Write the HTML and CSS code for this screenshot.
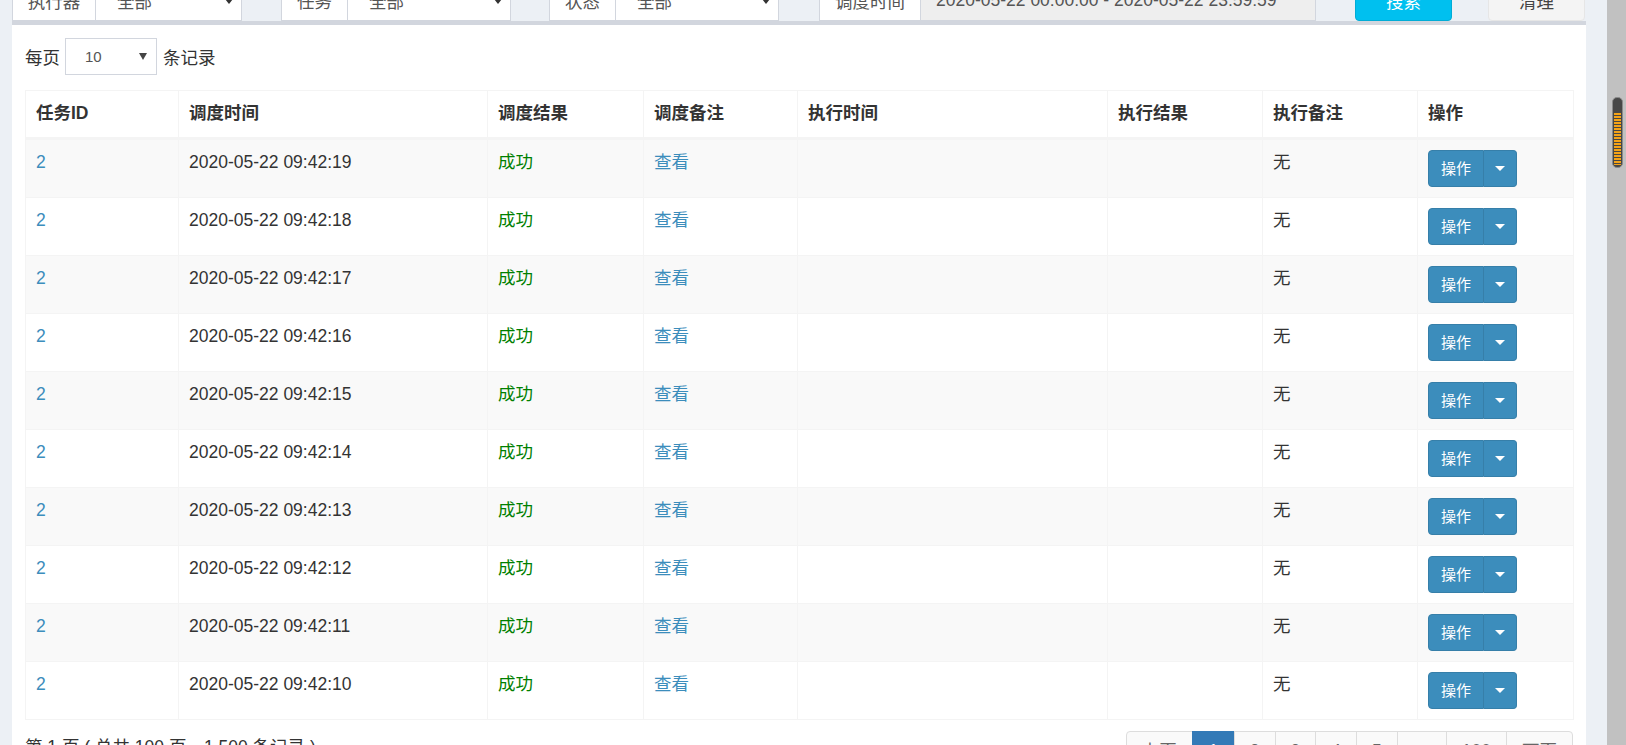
FILE: index.html
```html
<!DOCTYPE html>
<html lang="zh-CN">
<head>
<meta charset="utf-8">
<title>调度日志</title>
<link rel="stylesheet" href="styles.css">
</head>
<body>
<div class="screen">
  <div class="main">
    <div class="filters">
      <div class="group g1">
        <div class="addon">执行器</div>
        <div class="field"><span>全部</span><i class="arrow"></i></div>
      </div>
      <div class="group g2">
        <div class="addon">任务</div>
        <div class="field"><span>全部</span><i class="arrow"></i></div>
      </div>
      <div class="group g3">
        <div class="addon">状态</div>
        <div class="field"><span>全部</span><i class="arrow"></i></div>
      </div>
      <div class="group g4">
        <div class="addon">调度时间</div>
        <div class="field readonly"><span>2020-05-22 00:00:00 - 2020-05-22 23:59:59</span></div>
      </div>
      <div class="btn btn-search">搜索</div>
      <div class="btn btn-clear">清理</div>
    </div>

    <div class="box">
      <div class="length">
        <span>每页</span>
        <div class="sel"><span>10</span><i class="sel-arrow"></i></div>
        <span class="after">条记录</span>
      </div>

      <table class="grid">
        <thead>
          <tr>
            <th>任务ID</th>
            <th>调度时间</th>
            <th>调度结果</th>
            <th>调度备注</th>
            <th>执行时间</th>
            <th>执行结果</th>
            <th>执行备注</th>
            <th>操作</th>
          </tr>
        </thead>
        <tbody>
          <tr><td class="link">2</td><td>2020-05-22 09:42:19</td><td class="ok">成功</td><td class="link">查看</td><td></td><td></td><td>无</td><td><div class="op"><span class="op-main">操作</span><span class="op-caret"><i></i></span></div></td></tr>
          <tr><td class="link">2</td><td>2020-05-22 09:42:18</td><td class="ok">成功</td><td class="link">查看</td><td></td><td></td><td>无</td><td><div class="op"><span class="op-main">操作</span><span class="op-caret"><i></i></span></div></td></tr>
          <tr><td class="link">2</td><td>2020-05-22 09:42:17</td><td class="ok">成功</td><td class="link">查看</td><td></td><td></td><td>无</td><td><div class="op"><span class="op-main">操作</span><span class="op-caret"><i></i></span></div></td></tr>
          <tr><td class="link">2</td><td>2020-05-22 09:42:16</td><td class="ok">成功</td><td class="link">查看</td><td></td><td></td><td>无</td><td><div class="op"><span class="op-main">操作</span><span class="op-caret"><i></i></span></div></td></tr>
          <tr><td class="link">2</td><td>2020-05-22 09:42:15</td><td class="ok">成功</td><td class="link">查看</td><td></td><td></td><td>无</td><td><div class="op"><span class="op-main">操作</span><span class="op-caret"><i></i></span></div></td></tr>
          <tr><td class="link">2</td><td>2020-05-22 09:42:14</td><td class="ok">成功</td><td class="link">查看</td><td></td><td></td><td>无</td><td><div class="op"><span class="op-main">操作</span><span class="op-caret"><i></i></span></div></td></tr>
          <tr><td class="link">2</td><td>2020-05-22 09:42:13</td><td class="ok">成功</td><td class="link">查看</td><td></td><td></td><td>无</td><td><div class="op"><span class="op-main">操作</span><span class="op-caret"><i></i></span></div></td></tr>
          <tr><td class="link">2</td><td>2020-05-22 09:42:12</td><td class="ok">成功</td><td class="link">查看</td><td></td><td></td><td>无</td><td><div class="op"><span class="op-main">操作</span><span class="op-caret"><i></i></span></div></td></tr>
          <tr><td class="link">2</td><td>2020-05-22 09:42:11</td><td class="ok">成功</td><td class="link">查看</td><td></td><td></td><td>无</td><td><div class="op"><span class="op-main">操作</span><span class="op-caret"><i></i></span></div></td></tr>
          <tr><td class="link">2</td><td>2020-05-22 09:42:10</td><td class="ok">成功</td><td class="link">查看</td><td></td><td></td><td>无</td><td><div class="op"><span class="op-main">操作</span><span class="op-caret"><i></i></span></div></td></tr>
        </tbody>
      </table>

      <div class="foot">
        <div class="info">第 1 页 ( 总共 100 页，1,500 条记录 )</div>
        <ul class="pagination">
          <li class="first"><a>上页</a></li>
          <li class="active"><a>1</a></li>
          <li><a>2</a></li>
          <li><a>3</a></li>
          <li><a>4</a></li>
          <li><a>5</a></li>
          <li class="dots"><a>...</a></li>
          <li><a>100</a></li>
          <li class="last"><a>下页</a></li>
        </ul>
      </div>
    </div>
  </div>
  <div class="scrollbar">
    <div class="thumb"><div class="grip"></div></div>
  </div>
</div>
</body>
</html>
```

FILE: styles.css
```css
* {
  box-sizing: border-box;
}

html,
body {
  margin: 0;
  height: 100%;
  overflow: hidden;
}

body {
  font-family: "Liberation Sans", Arial, "Noto Sans CJK SC", sans-serif;
  font-size: 17.5px;
  color: #333;
  background: #ecf0f5;
}

.screen {
  display: flex;
  height: 745px;
  overflow: hidden;
}

.main {
  flex: 1;
  min-width: 0;
  background: #ecf0f5;
  padding: 0 21px 0 12px;
  overflow: hidden;
}

/* ---------- filter row (scrolled partly out of view) ---------- */
.filters {
  display: flex;
  height: 42px;
  margin-top: -21px;
}

.group {
  display: flex;
  height: 42px;
}

.addon {
  display: flex;
  align-items: center;
  justify-content: center;
  border: 1px solid #d2d6de;
  background: #fff;
  color: #555;
}

.field {
  display: flex;
  align-items: center;
  justify-content: space-between;
  border: 1px solid #d2d6de;
  border-left: 0;
  background: #fff;
  color: #555;
  padding: 0 8px 0 21px;
}

.field.readonly {
  background: #eee;
  padding-left: 15px;
}

.arrow {
  width: 0;
  height: 0;
  border-left: 4px solid transparent;
  border-right: 4px solid transparent;
  border-top: 5px solid #333;
  margin-top: 2px;
}

.g1 .addon { width: 84px; }
.g1 .field { width: 146px; }
.g2 { margin-left: 39px; }
.g2 .addon, .g3 .addon { width: 67px; }
.g2 .field, .g3 .field { width: 163px; }
.g3 { margin-left: 38px; }
.g4 { margin-left: 40px; }
.g4 .addon { width: 102px; }
.g4 .field { width: 395px; }

.btn {
  display: flex;
  align-items: center;
  justify-content: center;
  width: 97px;
  height: 42px;
  border-radius: 4px;
}

.btn-search {
  margin-left: 39px;
  background: #00c0ef;
  border: 1px solid #00acd6;
  color: #fff;
}

.btn-clear {
  margin-left: 36px;
  background: #f4f4f4;
  border: 1px solid #e6e6e6;
  color: #444;
}

/* ---------- box ---------- */
.box {
  background: #fff;
  border-top: 4px solid #d2d6de;
  padding: 13px 13px 0;
  height: 800px;
}

.length {
  display: flex;
  align-items: center;
  height: 37px;
  color: #333;
}

.sel {
  display: flex;
  align-items: center;
  justify-content: space-between;
  width: 92px;
  height: 37px;
  margin-left: 5px;
  border: 1px solid #d2d6de;
  padding: 0 9px 0 19px;
  font-size: 15px;
  color: #555;
}

.sel-arrow {
  width: 0;
  height: 0;
  border-left: 4px solid transparent;
  border-right: 4px solid transparent;
  border-top: 7px solid #444;
}

.after {
  margin-left: 6px;
}

/* ---------- table ---------- */
.grid {
  width: 1548px;
  margin-top: 15px;
  border-collapse: collapse;
  table-layout: fixed;
}

.grid th,
.grid td {
  border: 1px solid #f4f4f4;
  padding: 10px;
  line-height: 25px;
  text-align: left;
  vertical-align: top;
  white-space: nowrap;
}

.grid th {
  font-weight: bold;
  color: #333;
  padding-bottom: 11px;
  border-bottom-width: 3px;
}

.grid th:nth-child(1) { width: 153px; }
.grid th:nth-child(2) { width: 309px; }
.grid th:nth-child(3) { width: 156px; }
.grid th:nth-child(4) { width: 154px; }
.grid th:nth-child(5) { width: 310px; }
.grid th:nth-child(6) { width: 155px; }
.grid th:nth-child(7) { width: 155px; }
.grid th:nth-child(8) { width: 156px; }

.grid tbody tr:nth-child(odd) {
  background: #f9f9f9;
}

.grid td.link {
  color: #3c8dbc;
}

.grid td.ok {
  color: #008000;
}

.op {
  display: inline-flex;
  height: 37px;
  vertical-align: top;
}

.op-main {
  display: flex;
  align-items: center;
  justify-content: center;
  width: 56px;
  background: #3c8dbc;
  border: 1px solid #367fa9;
  border-radius: 4px 0 0 4px;
  color: #fff;
  font-size: 15px;
}

.op-caret {
  display: flex;
  align-items: center;
  justify-content: center;
  width: 33px;
  background: #3c8dbc;
  border: 1px solid #367fa9;
  border-left: 0;
  border-radius: 0 4px 4px 0;
}

.op-caret i {
  width: 0;
  height: 0;
  border-left: 5px solid transparent;
  border-right: 5px solid transparent;
  border-top: 5px solid #fff;
}

/* ---------- footer ---------- */
.foot {
  display: flex;
  justify-content: space-between;
  margin-top: 11px;
}

.info {
  padding-top: 4px;
  line-height: 25px;
}

.pagination {
  display: flex;
  list-style: none;
  margin: 0;
  padding: 0;
}

.pagination a {
  display: block;
  padding: 7px 15px;
  line-height: 25px;
  border: 1px solid #ddd;
  margin-left: -1px;
  background: #fafafa;
  color: #666;
  text-align: center;
}

.pagination .first a {
  margin-left: 0;
  border-radius: 4px 0 0 4px;
}

.pagination .last a {
  border-radius: 0 4px 4px 0;
}

.pagination .active a {
  min-width: 43px;
  background: #337ab7;
  border-color: #337ab7;
  color: #fff;
}

.pagination .dots a {
  min-width: 50px;
}

/* ---------- fake scrollbar ---------- */
.scrollbar {
  width: 19px;
  flex: none;
  background: #c1c1c1;
  padding-top: 97px;
}

.thumb {
  width: 11px;
  height: 71px;
  margin-left: 5px;
  background: #474747;
  border: 1px solid #8a8a8a;
  border-radius: 5px;
  padding: 15px 1px 2px 1px;
}

.grip {
  height: 52px;
  background: repeating-linear-gradient(to bottom, #f5a317 0, #f5a317 2px, #474747 2px, #474747 3px);
}
```
